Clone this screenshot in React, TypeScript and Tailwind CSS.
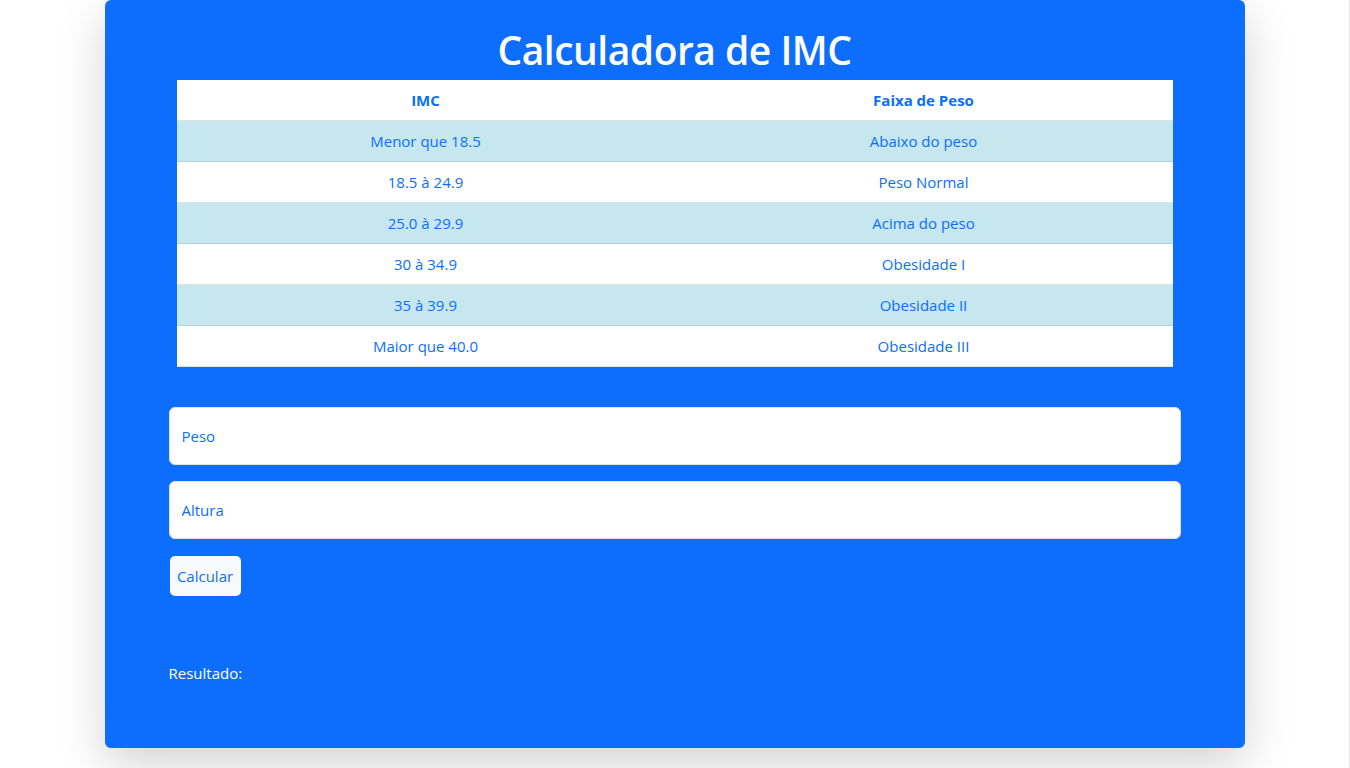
const rows = [
  ["Menor que 18.5", "Abaixo do peso"],
  ["18.5 à 24.9", "Peso Normal"],
  ["25.0 à 29.9", "Acima do peso"],
  ["30 à 34.9", "Obesidade I"],
  ["35 à 39.9", "Obesidade II"],
  ["Maior que 40.0", "Obesidade III"],
];

export default function App() {
  return (
    <div className="min-h-[768px] w-full bg-white border-r border-[#e5e5e5] font-['Open_Sans',sans-serif]">
      <div className="w-[1140px] h-[748px] mx-auto bg-[#0d6efd] rounded-md shadow-[0_1rem_3rem_rgba(0,0,0,0.175)] flex flex-col">
        <h1 className="text-white text-[39px] font-semibold text-center leading-[48px] pt-[26px] tracking-[-0.5px]">
          Calculadora de IMC
        </h1>
        <div className="mx-[72px] mt-[6px]">
          <table className="w-full bg-white text-[#0d6efd] text-[15px] text-center border-collapse">
            <thead>
              <tr className="h-[40px] border-b border-[#dee2e6]">
                <th className="font-bold w-1/2">IMC</th>
                <th className="font-bold">Faixa de Peso</th>
              </tr>
            </thead>
            <tbody>
              {rows.map((r, i) => (
                <tr
                  key={i}
                  className={
                    i % 2 === 0
                      ? "h-[41px] bg-[#c5e7ed] border-b border-[#b2d2d8]"
                      : "h-[41px] bg-white border-b border-[#dee2e6]"
                  }
                >
                  <td className="pt-[2px]">{r[0]}</td>
                  <td className="pt-[2px]">{r[1]}</td>
                </tr>
              ))}
            </tbody>
          </table>
        </div>
        <div className="mx-[64px] mt-[40px] flex flex-col">
          <input
            className="h-[58px] w-full bg-white rounded-[6px] border border-[#dee2e6] px-3 text-[15px] placeholder:text-[#0d6efd] outline-none"
            placeholder="Peso"
          />
          <input
            className="h-[58px] w-full bg-white rounded-[6px] border border-[#dee2e6] px-3 text-[15px] placeholder:text-[#0d6efd] outline-none mt-4"
            placeholder="Altura"
          />
          <div className="mt-[17px]">
            <button className="h-[40px] w-[71px] ml-[1px] pt-[2px] bg-[#f8f9fa] rounded-[5px] text-[#0d6efd] text-[15px]">
              Calcular
            </button>
          </div>
          <p className="text-white text-[15px] mt-[66px]">Resultado:</p>
        </div>
      </div>
    </div>
  );
}
